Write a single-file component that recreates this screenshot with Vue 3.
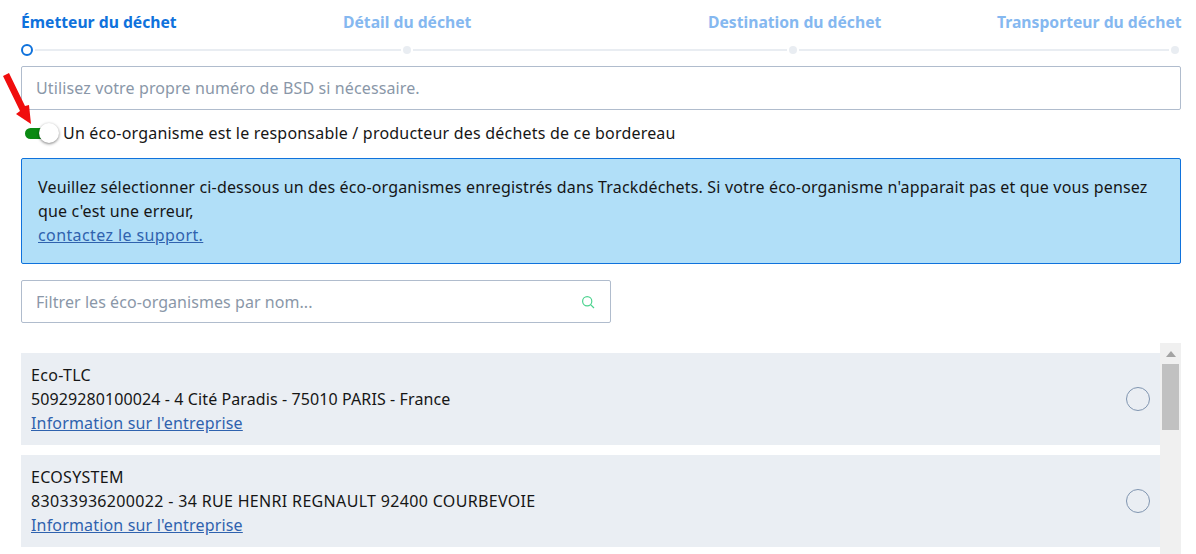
<script setup>
const steps = [
  { label: 'Émetteur du déchet', active: true },
  { label: 'Détail du déchet' },
  { label: 'Destination du déchet' },
  { label: 'Transporteur du déchet' }
]
const companies = [
  { name: 'Eco-TLC', detail: '50929280100024 - 4 Cité Paradis - 75010 PARIS - France' },
  { name: 'ECOSYSTEM', detail: '83033936200022 - 34 RUE HENRI REGNAULT 92400 COURBEVOIE' }
]
</script>

<template>
  <div class="page">
    <div class="steps">
      <div v-for="s in steps" :key="s.label" class="step" :class="{ active: s.active }">{{ s.label }}</div>
    </div>
    <div class="track">
      <span class="dot first"></span>
      <span class="line"></span>
      <span class="dot"></span>
      <span class="line"></span>
      <span class="dot"></span>
      <span class="line"></span>
      <span class="dot"></span>
    </div>
    <div class="input wide">Utilisez votre propre numéro de BSD si nécessaire.</div>
    <div class="toggle-row">
      <span class="toggle"><span class="knob"></span></span>
      <span>Un éco-organisme est le responsable / producteur des déchets de ce bordereau</span>
      <svg class="arrow" width="36" height="58" viewBox="0 0 36 58">
        <path d="M3 6 L9 3 L25 36 L29 35 L31 54 L16 44 L20 41 Z" fill="#f00d0d" />
      </svg>
    </div>
    <div class="notice">
      Veuillez sélectionner ci-dessous un des éco-organismes enregistrés dans Trackdéchets. Si votre éco-organisme n'apparait pas et que vous pensez que c'est une erreur,<br />
      <a href="#">contactez le support.</a>
    </div>
    <div class="input search">
      <span>Filtrer les éco-organismes par nom...</span>
      <svg width="14" height="14" viewBox="0 0 14 14" fill="none" stroke="#4cd38f" stroke-width="1.2">
        <circle cx="6.2" cy="6.2" r="4.6" />
        <path d="M9.6 9.6 L13 13" />
      </svg>
    </div>
    <div class="list">
      <div class="items">
        <div v-for="c in companies" :key="c.name" class="item">
          <div class="info">
            <div class="name">{{ c.name }}</div>
            <div class="detail">{{ c.detail }}</div>
            <a href="#">Information sur l'entreprise</a>
          </div>
          <span class="radio"></span>
        </div>
      </div>
      <div class="scrollbar">
        <span class="up"></span>
        <span class="thumb"></span>
      </div>
    </div>
  </div>
</template>

<style scoped>
.page {
  width: 1196px;
  height: 554px;
  box-sizing: border-box;
  padding: 12px 15px 0 21px;
  overflow: hidden;
  font-family: "Noto Sans", sans-serif;
  font-size: 16px;
  letter-spacing: 0.2px;
  color: #161616;
  background: #fff;
}
.steps {
  display: grid;
  grid-template-columns: 322px 365px 289px 184px;
  height: 20px;
  font-size: 15.7px;
  line-height: 20px;
  font-weight: 700;
  letter-spacing: 0;
  white-space: nowrap;
  color: #85b8f0;
}
.step.active { color: #0f72dc; }
.track {
  display: grid;
  grid-template-columns: 12px 366px 8px 374px 8px 370px 8px;
  column-gap: 2px;
  align-items: center;
  height: 12px;
  margin-top: 12px;
}
.line { height: 2px; background: #e9edf2; }
.dot { width: 8px; height: 8px; border-radius: 50%; background: #e9edf2; }
.dot.first {
  box-sizing: border-box;
  width: 12px;
  height: 12px;
  border: 2px solid #0f72dc;
  background: #fff;
}
.input {
  box-sizing: border-box;
  display: flex;
  align-items: center;
  justify-content: space-between;
  border: 1px solid #b0bccd;
  border-radius: 2px;
  padding: 0 15px 0 14px;
  letter-spacing: 0.12px;
  color: #8a97a8;
  background: #fff;
}
.wide { height: 44px; margin-top: 10px; }
.toggle-row {
  position: relative;
  display: flex;
  align-items: center;
  height: 24px;
  margin-top: 11px;
}
.toggle {
  position: relative;
  width: 30px;
  height: 11px;
  margin: 0 8px 0 4px;
  border-radius: 6px;
  background: #0a8a12;
}
.knob {
  position: absolute;
  top: -5px;
  right: -4px;
  width: 20px;
  height: 20px;
  border-radius: 50%;
  background: #fff;
  box-shadow: 0 1px 3px rgba(0, 0, 0, 0.5);
}
.arrow { position: absolute; left: -21px; top: -51px; }
.notice {
  box-sizing: border-box;
  height: 106px;
  margin-top: 13px;
  padding: 16px;
  border: 1px solid #0f72dc;
  border-radius: 2px;
  background: #b1dff8;
  line-height: 24px;
  letter-spacing: 0.165px;
}
a { color: #2f62ae; text-decoration: underline; }
.notice a { letter-spacing: 0.4px; }
.search { width: 590px; height: 43px; margin-top: 16px; }
.search span { letter-spacing: 0.06px; }
.list {
  display: flex;
  height: 220px;
  margin-top: 20px;
}
.items {
  flex: 1;
  display: flex;
  flex-direction: column;
  gap: 10px;
  padding-top: 10px;
}
.item {
  display: flex;
  align-items: center;
  justify-content: space-between;
  height: 92px;
  box-sizing: border-box;
  padding: 0 10px;
  background: #eaeef3;
  line-height: 24px;
  letter-spacing: 0.17px;
}
.name { letter-spacing: 0.3px; }
.detail { letter-spacing: 0.1px; }
.item:nth-child(2) .detail { letter-spacing: 0.33px; }
.radio {
  box-sizing: border-box;
  width: 24px;
  height: 24px;
  border: 1.5px solid #8095b0;
  border-radius: 50%;
}
.scrollbar {
  position: relative;
  width: 21px;
  background: #f0f0f0;
}
.up {
  position: absolute;
  left: 6px;
  top: 8px;
  border: 5px solid transparent;
  border-top: 0;
  border-bottom: 6px solid #a3a3a3;
}
.thumb {
  position: absolute;
  left: 2px;
  top: 21px;
  width: 17px;
  height: 66px;
  background: #c1c1c1;
}
</style>
